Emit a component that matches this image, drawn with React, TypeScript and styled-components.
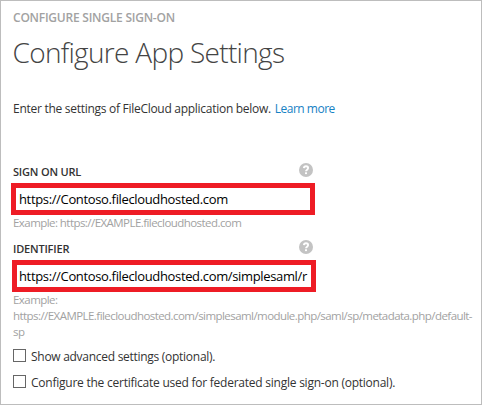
import React from "react";
import styled, { createGlobalStyle } from "styled-components";

const GlobalStyle = createGlobalStyle`
  * { box-sizing: border-box; }
  body { margin: 0; background: #fff; }
`;

const Panel = styled.main`
  width: 482px;
  height: 405px;
  border: 1px solid #bdbdbd;
  padding: 9px 8px 0 12px;
  overflow: hidden;
  background: #fff;
  color: #333;
  font: 12px/16px "Open Sans", sans-serif;
  white-space: nowrap;
`;

const Eyebrow = styled.div`
  color: #a2a2a2;
  font-weight: 600;
  letter-spacing: -0.23px;
`;

const Title = styled.h1`
  margin: 7px 0 0 -0.5px;
  color: #444;
  font-size: 28px;
  font-weight: 300;
  line-height: 38px;
  letter-spacing: -0.69px;
`;

const Intro = styled.p`
  margin: 30px 0 0;
  letter-spacing: -0.28px;
`;

const LearnMore = styled.a`
  margin-left: 1px;
  color: #1681c4;
  letter-spacing: -0.5px;
`;

const Field = styled.section<{ $top: number }>`
  margin-top: ${(p) => p.$top}px;
`;

const FieldHeader = styled.div`
  display: flex;
  justify-content: space-between;
  width: 300px;
  height: 20px;
  padding-top: 1px;
`;

const Label = styled.label`
  font-size: 11px;
  font-weight: 600;
  line-height: 18px;
  letter-spacing: -0.19px;
`;

const InputFrame = styled.div<{ $left: number }>`
  width: 304px;
  height: 32px;
  margin-top: 1px;
  margin-left: ${(p) => p.$left}px;
  padding-left: ${(p) => 1 - p.$left}px;
  border: 5px solid #ee1c25;
  color: #000;
  font-size: 13px;
  line-height: 22px;
  letter-spacing: -0.35px;
  overflow: hidden;
`;

const Hint = styled.div`
  color: #a2a2a2;
  font-size: 11.5px;
  line-height: 16px;
  letter-spacing: -0.555px;
`;

const Options = styled.div`
  display: grid;
  gap: 10px;
  margin-top: 9px;
`;

const Option = styled.label<{ $spacing: number }>`
  display: flex;
  gap: 5px;
  height: 16px;
  letter-spacing: ${(p) => p.$spacing}px;
`;

const Checkbox = styled.input`
  appearance: none;
  width: 13px;
  height: 13px;
  margin: 0;
  border: 1px solid #666;
  background: #fff;
`;

function HelpIcon() {
  return (
    <svg width="14" height="14" viewBox="0 0 14 14" role="img" aria-label="Help">
      <circle cx="7" cy="7" r="7" fill="#c3c3c3" />
      <path d="M4.9 5.1C5 3.8 5.8 3.2 7 3.2s2.1.7 2.1 1.8c0 1.7-2.1 1.6-2.1 3.3" fill="none" stroke="#fff" strokeWidth="1.9" />
      <rect x="6" y="9.3" width="2" height="1.8" fill="#fff" />
    </svg>
  );
}

export default function App() {
  return (
    <>
      <GlobalStyle />
      <Panel>
        <Eyebrow>CONFIGURE SINGLE SIGN-ON</Eyebrow>
        <Title>Configure App Settings</Title>
        <Intro>
          Enter the settings of FileCloud application below. <LearnMore>Learn more</LearnMore>
        </Intro>
        <Field $top={45}>
          <FieldHeader><Label>SIGN ON URL</Label><HelpIcon /></FieldHeader>
          <InputFrame $left={-2}>https://Contoso.filecloudhosted.com</InputFrame>
          <Hint>Example: https://EXAMPLE.filecloudhosted.com</Hint>
        </Field>
        <Field $top={8}>
          <FieldHeader><Label>IDENTIFIER</Label><HelpIcon /></FieldHeader>
          <InputFrame $left={-1}>https://Contoso.filecloudhosted.com/simplesaml/r</InputFrame>
          <Hint>
            Example:<br />
            https://EXAMPLE.filecloudhosted.com/simplesaml/module.php/saml/sp/metadata.php/default-<br />
            sp
          </Hint>
        </Field>
        <Options>
          <Option $spacing={-0.28}><Checkbox type="checkbox" />Show advanced settings (optional).</Option>
          <Option $spacing={-0.24}><Checkbox type="checkbox" />Configure the certificate used for federated single sign-on (optional).</Option>
        </Options>
      </Panel>
    </>
  );
}
